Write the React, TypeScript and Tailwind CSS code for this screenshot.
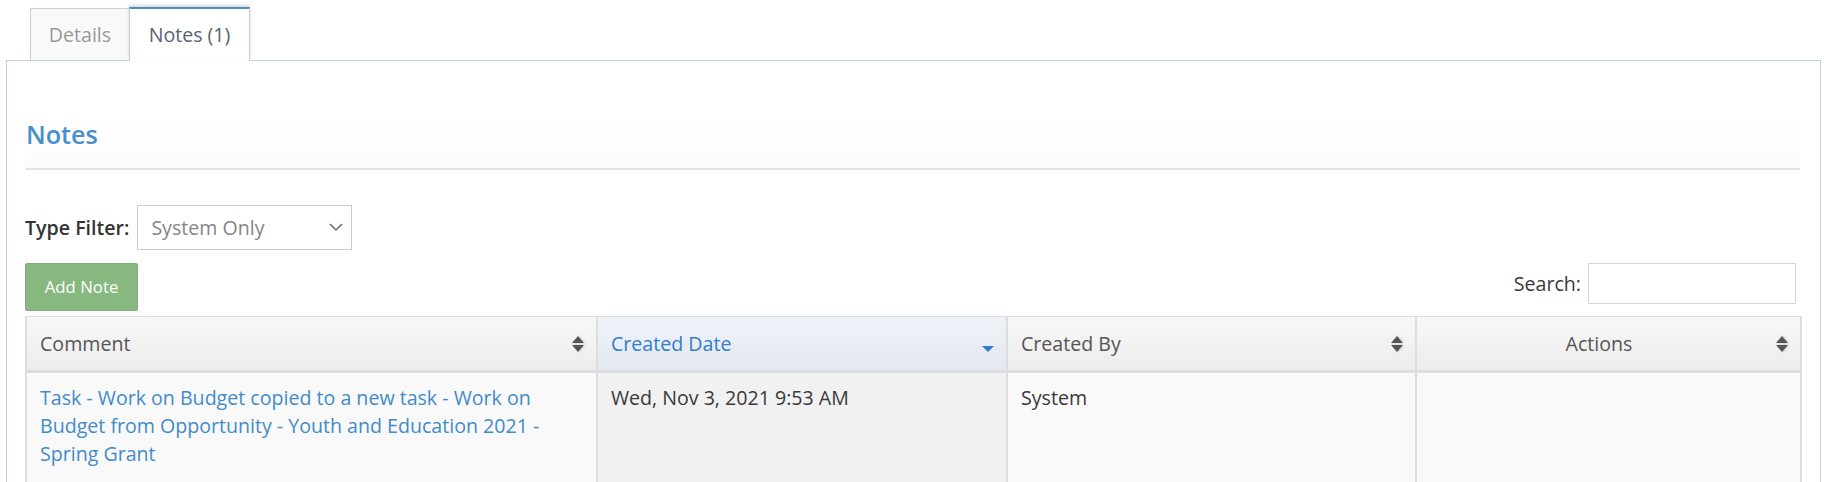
import React from 'react'

function SortBoth() {
  return (
    <svg width="12" height="16" viewBox="0 0 12 16" className="shrink-0 drop-shadow-[1px_0_1px_rgba(0,0,0,0.15)]">
      <path d="M0 7 L6 0 L12 7 Z" fill="#555" />
      <path d="M0 9 L12 9 L6 16 Z" fill="#555" />
    </svg>
  )
}

function SortDesc() {
  return (
    <svg width="12" height="16" viewBox="0 0 12 16" className="shrink-0">
      <path d="M0 10 L12 10 L6 16 Z" fill="#307ecc" />
    </svg>
  )
}

type Col = {
  label: string
  sorted?: boolean
  center?: boolean
}

const columns: Col[] = [
  { label: 'Comment' },
  { label: 'Created Date', sorted: true },
  { label: 'Created By' },
  { label: 'Actions', center: true },
]

export default function App() {
  return (
    <div className="h-[482px] overflow-hidden bg-white pl-[6px] pr-[3px] font-['Open_Sans',sans-serif] text-[19.6px] leading-[28px] text-[#393939]">
      {/* tabs */}
      <div className="relative z-10 -mb-px flex items-end pl-[24px] pt-[7px]">
        <div className="mb-px flex h-[52px] w-[100px] items-center justify-center border border-b-0 border-[#c5d0dc] bg-[#f9f9f9] text-[#999]">
          Details
        </div>
        <div className="-ml-px flex h-[54px] w-[121px] items-center justify-center border-x border-t-2 border-x-[#c5d0dc] border-t-[#4c8fbd] bg-white pb-[1px] text-[#576373] shadow-[0_-2px_3px_0_rgba(0,0,0,0.15)]">
          Notes (1)
        </div>
      </div>

      {/* panel */}
      <div className="border border-[#c5d0dc] px-[18px] pt-[51px]">
        <div className="mr-[2px] h-[58px] border-b-2 border-[#dde5ed] bg-gradient-to-b from-white to-[#fcfcfc] pl-px pt-[7px]">
          <h3 className="text-[25.2px] font-semibold leading-[30px] text-[#478fca]">Notes</h3>
        </div>

        <div className="mt-[35px] flex items-center gap-[8px]">
          <span className="font-semibold text-[#333]">Type Filter:</span>
          <div className="flex h-[45px] w-[215px] items-center justify-between border border-[#ccc] bg-white pl-[13px] pr-[8px] text-[#858585]">
            <span>System Only</span>
            <svg width="14" height="9" viewBox="0 0 14 9" fill="none" stroke="#666" strokeWidth="1.5">
              <polyline points="1,1 7,7 13,1" />
            </svg>
          </div>
        </div>

        <div className="mt-[13px] flex items-start justify-between">
          <button className="h-[48px] w-[113px] rounded-[2px] border border-[#7fae77] bg-[#87b87f] text-[16.8px] text-white">
            Add Note
          </button>
          <div className="flex items-center gap-[7px] pr-[6px]">
            <span className="text-[#393939]">Search:</span>
            <input className="h-[41px] w-[208px] border border-[#d5d5d5] bg-white px-2 outline-none" />
          </div>
        </div>

        {/* table */}
        <div className="mt-[5px] border-x-2 border-t border-[#dddddd]">
          <div className="grid grid-cols-[569px_410px_409px_1fr]">
            {columns.map((c, i) => (
              <div
                key={c.label}
                className={
                  'flex h-[56px] items-center gap-2 border-b-[3px] border-[#dddddd] pl-[13px] pr-[12px] ' +
                  (i > 0 ? 'border-l-2 ' : '') +
                  (c.sorted
                    ? 'bg-gradient-to-b from-[#eff3f8] to-[#e3e8f1] text-[#307ecc]'
                    : 'bg-gradient-to-b from-[#f8f8f8] to-[#ececec] text-[#555]')
                }
              >
                <span className={'flex-1 ' + (c.center ? 'text-center' : '')}>{c.label}</span>
                {c.sorted ? <SortDesc /> : <SortBoth />}
              </div>
            ))}

            <div className="bg-[#f9f9f9] px-[13px] pb-[30px] pt-[11px]">
              <a className="text-[#428bca]" href="#">
                Task - Work on Budget copied to a new task - Work on Budget from Opportunity - Youth and Education 2021 - Spring Grant
              </a>
            </div>
            <div className="border-l-2 border-[#dddddd] bg-[#f1f1f1] px-[13px] pt-[11px]">Wed, Nov 3, 2021 9:53 AM</div>
            <div className="border-l-2 border-[#dddddd] bg-[#f9f9f9] px-[13px] pt-[11px]">System</div>
            <div className="border-l-2 border-[#dddddd] bg-[#f9f9f9] px-[13px] pt-[11px]"></div>
          </div>
        </div>
      </div>
    </div>
  )
}
